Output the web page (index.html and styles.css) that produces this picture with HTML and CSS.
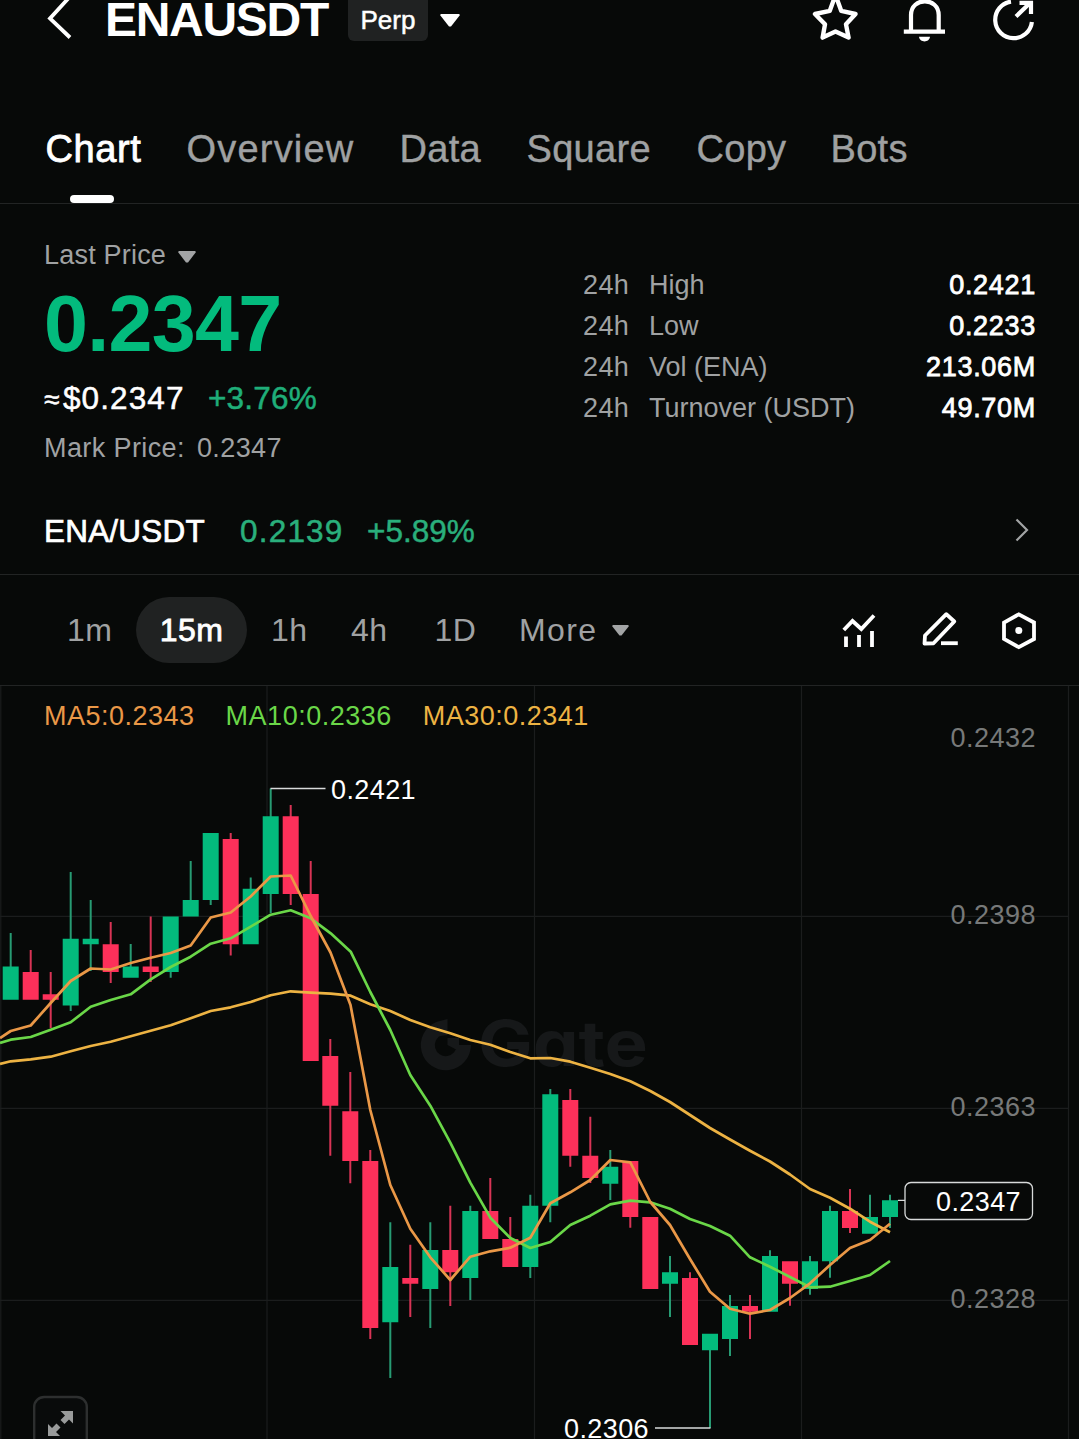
FILE: index.html
```html
<!DOCTYPE html>
<html lang="en">
<head>
<meta charset="utf-8">
<title>ENAUSDT Perp</title>
<link rel="stylesheet" href="styles.css">
</head>
<body>
<header class="topbar">
  <svg class="back" width="26" height="41" viewBox="46 0 26 41"><path d="M70.5 -4L50 18.5L70 37.5" fill="none" stroke="#fff" stroke-width="3.8"/></svg>
  <h1 class="symbol">ENAUSDT</h1>
  <span class="badge">Perp</span>
  <svg class="symbol-caret" width="20" height="13" viewBox="0 0 20 13"><path d="M1 0H19L20 1L11 12.5H9L0 1Z" fill="#fff"/></svg>
  <div class="actions">
    <svg width="48" height="44" viewBox="811 0 48 44"><path d="M835.5 -5L841.2 10.8L855.5 14L846 24.3L848.6 37.6L835.5 31.5L822.6 37.6L825 24.3L815 14L829.8 10.8Z" fill="none" stroke="#fff" stroke-width="4.4" stroke-linejoin="round"/></svg>
    <svg width="42" height="44" viewBox="903 0 42 44"><path d="M911 31V15C911 -3.3 938.7 -3.3 938.7 15V31M903.8 31.6H945" fill="none" stroke="#fff" stroke-width="4.2"/><path d="M919 36.8H930C929.5 43 919.5 43 919 36.8Z" fill="#fff"/></svg>
    <svg width="44" height="44" viewBox="992 0 44 44"><path d="M1011 1.6A18.4 18.4 0 1 0 1031.9 22M1016 16.5L1030 3M1019.5 2.8H1031V14" fill="none" stroke="#fff" stroke-width="4.2"/></svg>
  </div>
</header>

<nav class="tabs">
  <a class="tab active">Chart</a>
  <a class="tab overview">Overview</a>
  <a class="tab">Data</a>
  <a class="tab">Square</a>
  <a class="tab">Copy</a>
  <a class="tab">Bots</a>
</nav>

<section class="summary">
  <div class="price-col">
    <div class="last-label">Last Price <svg width="18" height="12" viewBox="0 0 18 12"><path d="M1 0H17L18 1L10 11.5H8L0 1Z" fill="#a2a4a5"/></svg></div>
    <div class="last-price">0.2347</div>
    <div class="fiat-row"><span class="fiat"><span class="approx">≈</span>$0.2347</span><span class="change">+3.76%</span></div>
    <div class="mark"><span>Mark Price:</span><span class="mark-value">0.2347</span></div>
  </div>
  <div class="stats">
    <div class="stat"><span class="period">24h</span><span>High</span><span class="value">0.2421</span></div>
    <div class="stat"><span class="period">24h</span><span>Low</span><span class="value">0.2233</span></div>
    <div class="stat"><span class="period">24h</span><span>Vol (ENA)</span><span class="value">213.06M</span></div>
    <div class="stat"><span class="period">24h</span><span>Turnover (USDT)</span><span class="value">49.70M</span></div>
  </div>
</section>

<section class="spot">
  <span class="spot-name">ENA/USDT</span>
  <span class="spot-price">0.2139</span>
  <span class="spot-change">+5.89%</span>
  <svg class="chevron" width="14" height="24" viewBox="0 0 14 24"><path d="M1.5 1.5L12 12L1.5 22.5" fill="none" stroke="#a2a4a5" stroke-width="2.2"/></svg>
</section>

<section class="toolbar">
  <div class="intervals">
    <span>1m</span>
    <span class="selected">15m</span>
    <span>1h</span>
    <span>4h</span>
    <span>1D</span>
    <span class="more">More <svg width="17" height="11" viewBox="0 0 17 11"><path d="M1 0H16L17 1L9.5 10.5H7.5L0 1Z" fill="#a2a4a5"/></svg></span>
  </div>
  <svg class="tools" width="196" height="40" viewBox="842 610 196 40" fill="none" stroke="#fff" stroke-width="3.8">
    <path d="M843.8 630L852.5 621L861.3 629L874 615.5"/>
    <path d="M846 636.5V647M859 635V647M872 631V647"/>
    <path d="M946.3 614.2L954.3 621.5L933.5 643.3L924.5 643.5L925 635.5Z" stroke-linejoin="round"/>
    <path d="M941 643.2H957.8"/>
    <path d="M1018.8 614.3L1034 622.5V639L1018.8 647.2L1004 639V622.5Z"/>
    <circle cx="1018.8" cy="630.5" r="3.5" fill="#fff" stroke="none"/>
  </svg>
</section>

<section class="chart">
  <svg class="plot" width="1079" height="753" viewBox="0 686 1079 753">
    <g fill="none" stroke="#1b1d1d" stroke-width="1.2">
      <path d="M.8 686V1439M267 686V1439M534.5 686V1439M801.5 686V1439M1068.5 686V1439"/>
      <path d="M0 916.3H1068M0 1108.3H1068M0 1300.3H1068"/>
    </g>
    <g class="watermark">
      <path d="M439 1028.5A18 18 0 1 0 463.8 1045" fill="none" stroke="#161819" stroke-width="14"/>
      <path d="M436 1022L447.5 1019V1035L440 1036ZM447.5 1038H459V1045H471L470 1050H457L447.5 1045Z" fill="#161819"/>
      <text x="478" y="1066" textLength="170" lengthAdjust="spacingAndGlyphs">Gate</text>
    </g>
    <g class="axis">
      <text x="1036" y="747">0.2432</text>
      <text x="1036" y="924">0.2398</text>
      <text x="1036" y="1116">0.2363</text>
      <text x="1036" y="1308">0.2328</text>
    </g>
    <g fill="none" stroke-width="2">
      <path stroke="#279b73" d="M10.7 933V967M70.7 872V1011M90.7 900V971M130.7 944V967M170.7 970V977.7M190.7 861V900M210.7 900V905M250.7 877.5V890M270.7 788.5V913M390.3 1222.3V1378M430.3 1222.3V1328M470.3 1205.7V1300M530.3 1194.7V1278M550.3 1089V1222.3M610.3 1150V1200M670 1256V1317M710 1334V1428M730 1295V1356M770 1250.3V1258M810 1256V1294.7M830 1205.7V1277.7M870 1194.7V1218M890 1194.7V1228"/>
      <path stroke="#d83455" d="M30.7 950V973M50.7 972V1028M110.7 922V983M150.7 916.5V982M230.7 833V955.5M290.7 805V905M310.7 861V895M330.3 1039V1155.7M350.3 1072V1183.3M370.3 1150V1339M410.3 1244.7V1317M450.3 1205.7V1306M490.3 1178V1212M510.3 1217V1240M570.3 1089V1166.7M590.3 1116.7V1183M630.3 1161V1227.7M690 1272.3V1280M750 1295V1339M790 1262V1305.7M850 1189V1233"/>
    </g>
    <g fill="none" stroke-width="16">
      <path stroke="#03bb7d" d="M10.7 966.5V999.7M70.7 938.7V1005.5M90.7 938.7V944.3M130.7 966.5V977.7M170.7 916.5V972M190.7 900V916.5M210.7 833V900M250.7 888.7V944.3M270.7 816.3V894M390.3 1267V1322.3M430.3 1250V1289M470.3 1211V1278M530.3 1205.7V1267M550.3 1094.3V1205.7M610.3 1166.7V1183.7M670 1272.3V1283.7M710 1333.7V1350.3M730 1306V1339M770 1256V1311.7M810 1261.3V1289M830 1211V1261.3M870 1217V1233.7M890 1200.3V1217"/>
      <path stroke="#fd305a" d="M30.7 972V999.7M50.7 994.3V999.7M110.7 944.3V972M150.7 966.5V972M230.7 839V944.3M290.7 816.3V894M310.7 894V1061M330.3 1056V1105.7M350.3 1111.3V1161M370.3 1161V1328M410.3 1278V1283.7M450.3 1250V1272.3M490.3 1211V1239M510.3 1239V1267M570.3 1100V1155.7M590.3 1155.7V1178M630.3 1161V1217M650.3 1217V1289M690 1278V1345M750 1306V1311.7M790 1261.3V1283.7M850 1211V1228"/>
    </g>
    <g fill="none" stroke-width="2.7" stroke-linejoin="round">
      <path stroke="#edb343" d="M0 1064L10.7 1061.3L30.7 1059.3L50.7 1056.7L70.7 1051.3L90.7 1046L110.7 1041.7L130.7 1036.3L150.7 1030.7L170.7 1025.3L190.7 1018.3L210.7 1011L230.7 1007.3L250.7 1002L270.7 995.3L290.7 991.3L310.7 992.7L330.7 993.7L350.7 995.7L370.3 1004.3L390.3 1011L410.3 1020L430.3 1027.3L450.3 1033.3L470.3 1040L490.3 1044.7L510.3 1052L530.3 1058.3L550.3 1058L570.3 1061.7L590.3 1067.7L610.3 1074L630.3 1081.3L650.3 1091L670 1102L690 1115L710 1128L730 1139.5L750 1150.7L770 1161.5L790 1174.5L810 1189L830 1197.7L850 1208.7L870 1221.7L890 1232.3"/>
      <path stroke="#6ad748" d="M0 1043L10.7 1039.7L30.7 1037L50.7 1029.7L70.7 1022.3L90.7 1006.7L110.7 1000L130.7 994.3L150.7 979.3L170.7 967L190.7 956.7L210.7 943.7L230.7 938.3L250.7 926.7L270.7 914.7L290.7 910.3L310.7 918.3L330.7 933.3L350.7 951.7L370.3 992L390.3 1030L410.3 1075L430.3 1105.7L450.3 1142.7L470.3 1182.7L490.3 1217.7L510.3 1238L530.3 1248L550.3 1242L570.3 1225L590.3 1215.7L610.3 1204.3L630.3 1200.7L650.3 1202.3L670 1208.7L690 1219L710 1226L730 1235.7L750 1257.3L770 1266.7L790 1277L810 1287.3L830 1286.7L850 1281L870 1275L890 1261"/>
      <path stroke="#ea9847" d="M0 1038L10.7 1031L30.7 1025.5L50.7 1003L70.7 981L90.7 968.5L110.7 969.5L130.7 963L150.7 957.7L170.7 953L190.7 945.5L210.7 917.5L230.7 912.5L250.7 896.5L270.7 876.5L290.7 875.5L310.7 916L330.5 952.5L350.5 1005L370.3 1110L390.3 1185L410.3 1228.7L430.3 1257.3L450.3 1280L470.3 1256.7L490.3 1251.3L510.3 1247.7L530.3 1237.7L550.3 1203.3L570.3 1192.3L590.3 1180L610.3 1160L630.3 1162.3L650.3 1202L670 1225L690 1259L710 1291.7L730 1308.7L750 1313.7L770 1310L790 1298L810 1283.3L830 1265L850 1248L870 1240L890 1223.7"/>
    </g>
    <g fill="none" stroke="#d8dada" stroke-width="1.3">
      <path d="M270.5 788.5H325.5M655 1428H710.5M898 1200.3H905"/>
      <rect x="905" y="1182.5" width="127.5" height="37" rx="6" fill="#070908"/>
    </g>
    <g class="marker">
      <text x="331" y="799">0.2421</text>
      <text x="564" y="1438">0.2306</text>
      <text x="936" y="1211">0.2347</text>
    </g>
    <rect x="34.2" y="1397" width="52.6" height="60" rx="10" fill="#090b0b" stroke="#2d2f2f" stroke-width="2.4"/>
    <path d="M60.5 1411H73V1423.5L69 1419.5L64.5 1424L60.5 1420L65 1415.5ZM48 1424L52 1428L56.5 1423.5L60.5 1427.5L56 1432L60 1436H48Z" fill="#999b9b"/>
  </svg>
  <div class="legend"><span class="ma5">MA5:0.2343</span><span class="ma10">MA10:0.2336</span><span class="ma30">MA30:0.2341</span></div>
</section>
</body>
</html>
```
FILE: styles.css
```css
* { box-sizing: border-box; }

body {
  margin: 0;
  width: 1079px;
  height: 1439px;
  overflow: hidden;
  background: #070908;
  color: #fff;
  font-family: "Liberation Sans", Arial, sans-serif;
  font-size: 27px;
  white-space: nowrap;
}

svg { display: block; flex: none; }

/* Header */
.topbar {
  display: flex;
  align-items: flex-start;
  height: 41px;
  padding: 0 43px 0 46px;
}
.symbol {
  margin: 0 0 0 33px;
  width: 243px;
  font-size: 48px;
  line-height: 39px;
  letter-spacing: -1.3px;
}
.badge {
  width: 80px;
  height: 41px;
  border-radius: 0 0 6px 6px;
  background: #202222;
  font-size: 26px;
  line-height: 40px;
  text-align: center;
  -webkit-text-stroke: .5px;
}
.symbol-caret { margin: 14px 0 0 12px; }
.actions { display: flex; gap: 44px; margin-left: auto; }
.actions svg:last-child { margin-left: 3px; }

/* Page tabs */
.tabs {
  display: grid;
  grid-template-columns: 142px 213px 127px 170px 134px auto;
  height: 163px;
  padding: 86px 0 0 44.5px;
  border-bottom: 1px solid #222424;
}
.tab {
  justify-self: start;
  color: #9fa1a2;
  font-size: 38px;
  line-height: 44px;
  letter-spacing: .3px;
  -webkit-text-stroke: .4px;
}
.overview { letter-spacing: 1.2px; }
.active { padding-left: 1px; color: #fff; letter-spacing: .6px; -webkit-text-stroke: .8px; }
.active::after {
  content: "";
  display: block;
  width: 44px;
  height: 8px;
  margin: 24px auto 0 24.5px;
  border-radius: 4px;
  background: #fff;
}

/* Price summary */
.summary {
  display: flex;
  justify-content: space-between;
  height: 261px;
  padding: 0 43px 0 44px;
  color: #a0a2a3;
}
.price-col { padding-top: 33px; }
.last-label { display: flex; align-items: center; gap: 12px; line-height: 36px; letter-spacing: .2px; }
.last-label svg { margin-top: 3px; }
.last-price {
  margin-top: 11px;
  color: #03bb7d;
  font-size: 79px;
  font-weight: 700;
  line-height: 80px;
  letter-spacing: -.7px;
}
.fiat-row {
  display: flex;
  margin-top: 16px;
  font-size: 31.5px;
  line-height: 36px;
  -webkit-text-stroke: .5px;
}
.fiat { width: 164px; color: #fff; letter-spacing: 1.1px; }
.approx { display: inline-block; width: 19px; font-size: 28px; }
.change { color: #1fae79; letter-spacing: .2px; }
.mark { display: flex; gap: 12px; margin-top: 12px; line-height: 36px; letter-spacing: .4px; }
.stats { width: 453px; padding-top: 61px; }
.stat { display: flex; line-height: 41px; }
.period { width: 66px; letter-spacing: .4px; }
.value { margin-left: auto; color: #fff; letter-spacing: .7px; -webkit-text-stroke: .8px; }

/* Spot pair */
.spot {
  display: flex;
  align-items: center;
  height: 110px;
  padding: 46px 50px 23px 44px;
  border-bottom: 1px solid #222424;
  font-size: 31.5px;
  line-height: 40px;
  -webkit-text-stroke: .5px;
}
.spot-name { width: 196px; letter-spacing: .2px; -webkit-text-stroke: .7px; }
.spot-price { width: 127px; color: #2aaf7c; letter-spacing: 1.2px; }
.spot-change { color: #2aaf7c; }
.chevron { margin: -3px 0 0 auto; }

/* Interval toolbar */
.toolbar {
  display: flex;
  align-items: center;
  justify-content: space-between;
  height: 111px;
  padding: 0 41px 0 67px;
  border-bottom: 1px solid #222424;
  color: #a0a2a3;
}
.intervals {
  display: grid;
  grid-template-columns: 69px 135px 80px 83.5px 84.5px auto;
  font-size: 32px;
  line-height: 66px;
  letter-spacing: .5px;
}
.selected {
  width: 111px;
  border-radius: 33px;
  background: #202222;
  color: #fff;
  text-align: center;
  -webkit-text-stroke: .8px;
}
.more { display: flex; align-items: center; gap: 14px; letter-spacing: 1.4px; }

/* Candlestick chart */
.chart { position: relative; height: 753px; }
.legend {
  position: absolute;
  top: 12px;
  left: 44px;
  display: flex;
  gap: 31px;
  line-height: 36px;
  letter-spacing: .5px;
}
.ma5 { color: #ea9847; }
.ma10 { color: #6ad748; }
.ma30 { color: #edb343; }
.axis text { fill: #777979; text-anchor: end; letter-spacing: .5px; }
.marker text { fill: #fff; letter-spacing: .4px; }
.watermark text {
  fill: #161819;
  font: 700 63px Inter, sans-serif;
  font-feature-settings: "cv11";
}
```
